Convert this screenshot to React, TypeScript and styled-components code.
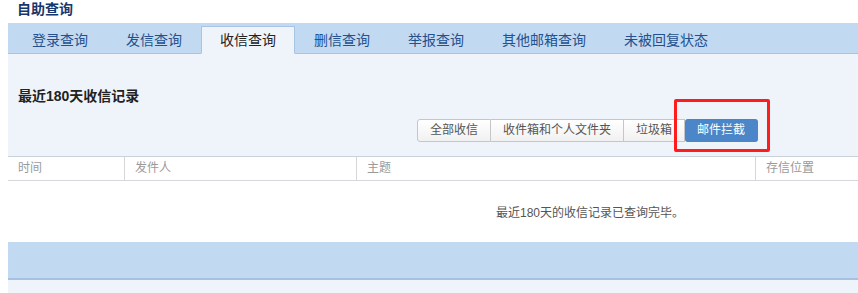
import React from 'react'
import styled, { createGlobalStyle } from 'styled-components'

const GlobalStyle = createGlobalStyle`
    html, body {
        margin: 0;
        padding: 0;
        background: #ffffff;
        overflow: hidden;
    }
    body {
        font-family: 'Liberation Sans', 'Noto Sans CJK SC', sans-serif;
    }
`

const Page = styled.div`
    width: 850px;
    padding-left: 8px;
`

const PageTitle = styled.div`
    height: 23px;
    padding-left: 9px;
    font-size: 14px;
    line-height: 18px;
    font-weight: bold;
    color: #17376a;
`

const TabBar = styled.div`
    display: flex;
    align-items: flex-end;
    height: 30px;
    padding-left: 5px;
    background: #c2d9f2;
    border-bottom: 1px solid #a8c4e4;
`

const Tab = styled.div<{ active?: boolean }>`
    height: 26px;
    padding: 0 18px;
    margin-bottom: -1px;
    font-size: 14px;
    line-height: 26px;
    white-space: nowrap;
    color: ${(props) => (props.active ? '#222222' : '#24508d')};
    background: ${(props) => (props.active ? '#eff4fb' : 'transparent')};
    border: 1px solid ${(props) => (props.active ? '#a8c4e4' : 'transparent')};
    border-bottom: 1px solid ${(props) => (props.active ? '#eff4fb' : 'transparent')};
`

const Panel = styled.div`
    position: relative;
    height: 102px;
    background: #eff4fb;
`

const SectionTitle = styled.div`
    padding: 35px 0 0 10px;
    height: 30px;
    font-size: 14px;
    line-height: 14px;
    font-weight: bold;
    color: #222222;
`

const FilterRow = styled.div`
    display: flex;
    padding-left: 409px;
`

const FilterButton = styled.div<{ active?: boolean; first?: boolean }>`
    height: 21px;
    padding: 0 12px;
    font-size: 12px;
    line-height: 21px;
    white-space: nowrap;
    color: ${(props) => (props.active ? '#ffffff' : '#555555')};
    background: ${(props) =>
        props.active ? '#4a86c8' : 'linear-gradient(#ffffff, #f1f1f1)'};
    border: 1px solid ${(props) => (props.active ? '#4a86c8' : '#c6c6c6')};
    border-left-width: ${(props) => (props.first ? 1 : 0)}px;
    border-radius: ${(props) =>
        props.first ? '3px 0 0 3px' : props.active ? '3px' : '0'};
`

const Highlight = styled.div`
    position: absolute;
    left: 666px;
    top: 45px;
    width: 90px;
    height: 47px;
    border: 3px solid #ff1c1c;
    border-radius: 2px;
`

const TableHeader = styled.div`
    display: grid;
    grid-template-columns: 116px 232px 399px 1fr;
    height: 23px;
    border-top: 1px solid #c9d2dc;
    border-bottom: 1px solid #d4d8dd;
    background: #ffffff;
`

const HeaderCell = styled.div`
    padding-left: 10px;
    font-size: 12px;
    line-height: 23px;
    color: #9a9a9a;
    border-left: 1px solid #d6d6d6;

    &:first-child {
        border-left: none;
    }
`

const EmptyMessage = styled.div`
    height: 61px;
    padding-left: 488px;
    font-size: 12px;
    line-height: 64px;
    color: #555555;
`

const FooterBar = styled.div`
    height: 36px;
    background: #c2d9f2;
    border-bottom: 2px solid #a6c1e1;
`

const FooterStrip = styled.div`
    height: 20px;
    background: #eff4fb;
`

const tabs = ['登录查询', '发信查询', '收信查询', '删信查询', '举报查询', '其他邮箱查询', '未被回复状态']

const filters = ['全部收信', '收件箱和个人文件夹', '垃圾箱', '邮件拦截']

const columns = ['时间', '发件人', '主题', '存信位置']

const App = () => {
    return (
        <Page>
            <GlobalStyle />
            <PageTitle>自助查询</PageTitle>
            <TabBar>
                {tabs.map((tab) => (
                    <Tab key={tab} active={tab === '收信查询'}>
                        {tab}
                    </Tab>
                ))}
            </TabBar>
            <Panel>
                <SectionTitle>最近180天收信记录</SectionTitle>
                <FilterRow>
                    {filters.map((label, index) => (
                        <FilterButton
                            key={label}
                            first={index === 0}
                            active={index === filters.length - 1}
                        >
                            {label}
                        </FilterButton>
                    ))}
                </FilterRow>
                <Highlight />
            </Panel>
            <TableHeader>
                {columns.map((col) => (
                    <HeaderCell key={col}>{col}</HeaderCell>
                ))}
            </TableHeader>
            <EmptyMessage>最近180天的收信记录已查询完毕。</EmptyMessage>
            <FooterBar />
            <FooterStrip />
        </Page>
    )
}

export default App
